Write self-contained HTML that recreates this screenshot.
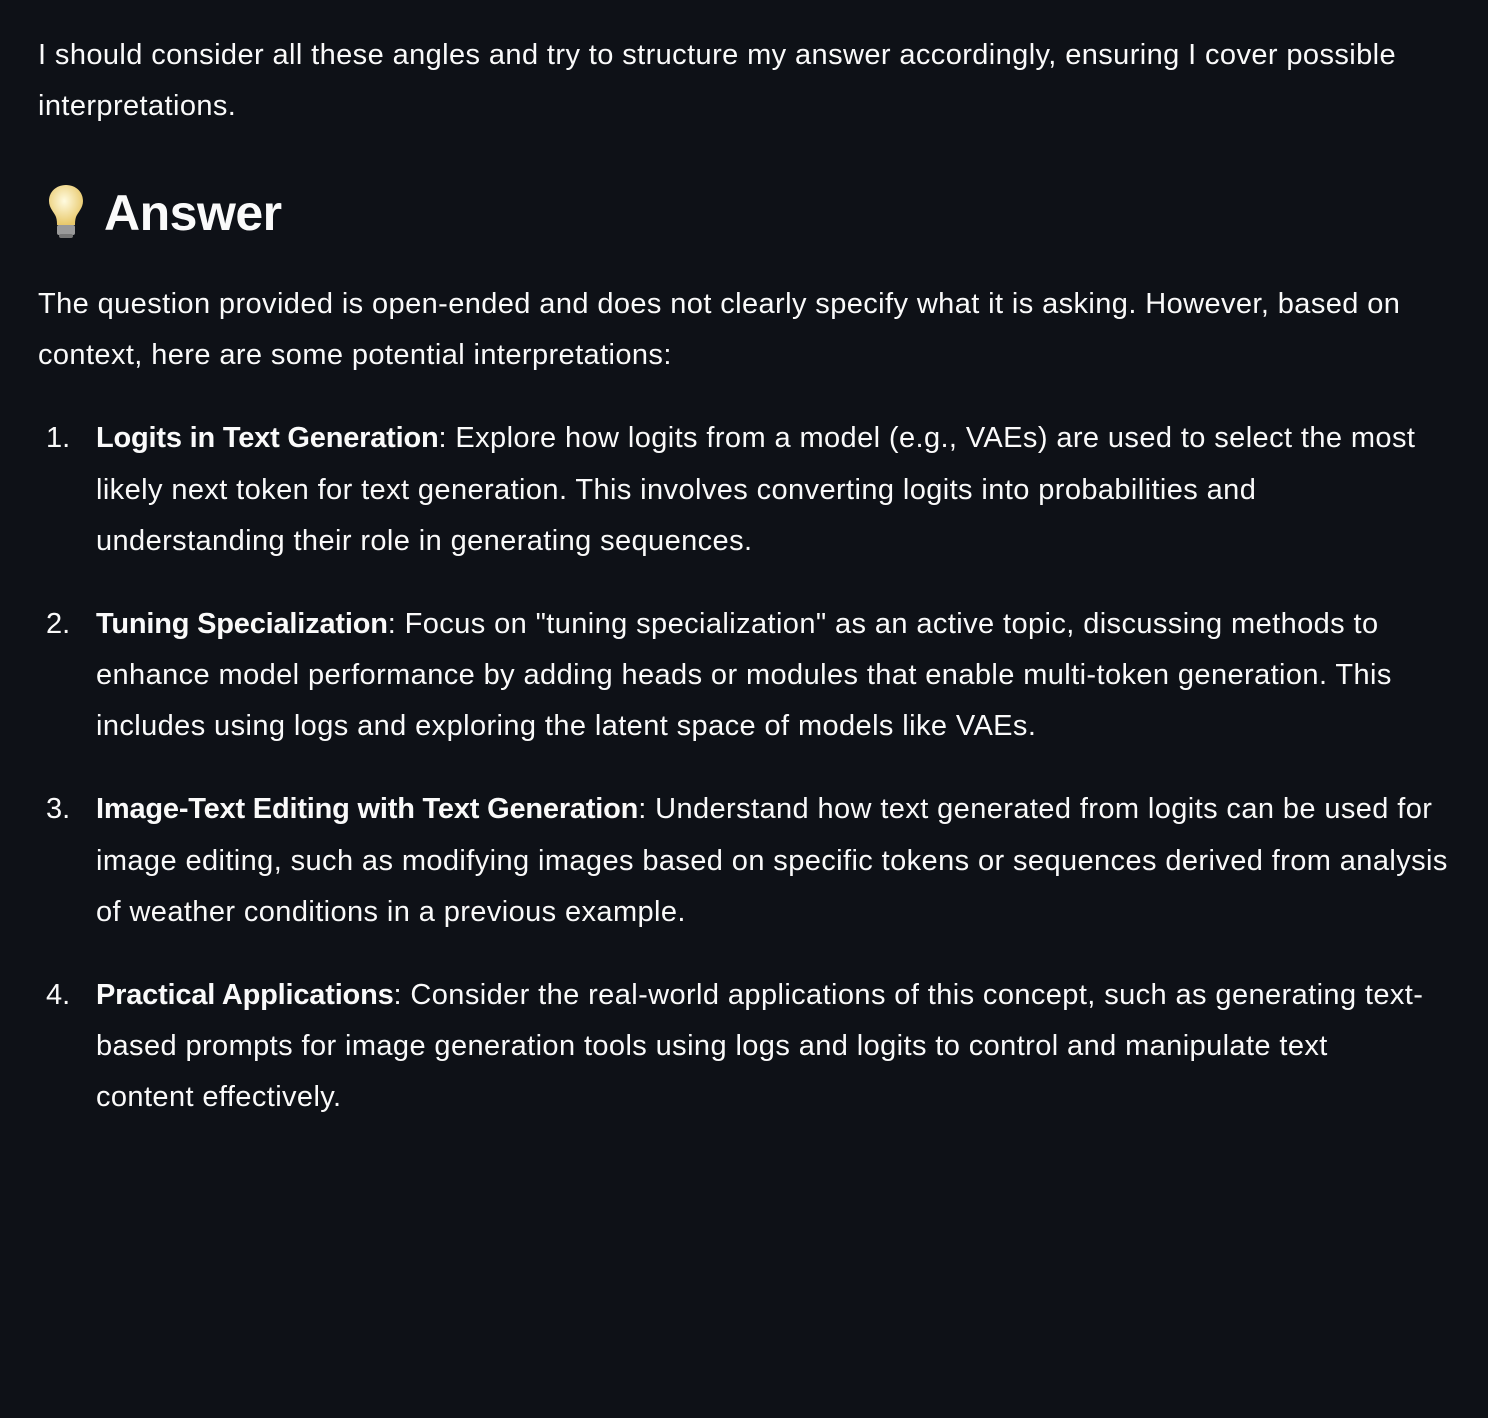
<!DOCTYPE html>
<html><head><meta charset="utf-8"><style>
html,body{margin:0;padding:0;background:#0e1117;width:1488px;height:1418px;overflow:hidden}
body{position:relative;color:#fafafa;font-family:"Liberation Sans",sans-serif;font-size:29px}
.l{position:absolute;white-space:nowrap;height:51px;line-height:51px;letter-spacing:0.4px;margin-top:1px}
b{font-weight:bold;letter-spacing:-0.2px}
.n{position:absolute;left:46px;height:51px;line-height:51px;margin-top:1px}
h2{position:absolute;left:104px;top:180px;margin:0;font-size:50px;line-height:66px;font-weight:bold;letter-spacing:-0.5px}
</style></head><body>
<div class="l" style="left:38px;top:29px">I should consider all these angles and try to structure my answer accordingly, ensuring I cover possible</div>
<div class="l" style="left:38px;top:80px">interpretations.</div>
<svg style="position:absolute;left:44px;top:182px" width="44" height="58" viewBox="0 0 44 58">
<defs><radialGradient id="g" cx="0.45" cy="0.4" r="0.6"><stop offset="0" stop-color="#fffbe0"/><stop offset="1" stop-color="#e8c86a"/></radialGradient></defs>
<path d="M22 3C12 3 5 10 5 19c0 7 5 11 7 16 1 3 1 6 1 8h18c0-2 0-5 1-8 2-5 7-9 7-16C39 10 32 3 22 3z" fill="url(#g)"/>
<rect x="13" y="43" width="18" height="10" rx="2" fill="#9a9a9a"/>
<rect x="15" y="52" width="14" height="4" rx="2" fill="#777"/>
</svg>
<h2>Answer</h2>
<div class="l" style="left:38px;top:278px">The question provided is open-ended and does not clearly specify what it is asking. However, based on</div>
<div class="l" style="left:38px;top:329px">context, here are some potential interpretations:</div>

<div class="n" style="top:412px">1.</div>
<div class="l" style="left:96px;top:412px"><b>Logits in Text Generation</b>: Explore how logits from a model (e.g., VAEs) are used to select the most</div>
<div class="l" style="left:96px;top:464px">likely next token for text generation. This involves converting logits into probabilities and</div>
<div class="l" style="left:96px;top:515px">understanding their role in generating sequences.</div>

<div class="n" style="top:598px">2.</div>
<div class="l" style="left:96px;top:598px"><b>Tuning Specialization</b>: Focus on "tuning specialization" as an active topic, discussing methods to</div>
<div class="l" style="left:96px;top:649px">enhance model performance by adding heads or modules that enable multi-token generation. This</div>
<div class="l" style="left:96px;top:700px">includes using logs and exploring the latent space of models like VAEs.</div>

<div class="n" style="top:783px">3.</div>
<div class="l" style="left:96px;top:783px"><b>Image-Text Editing with Text Generation</b>: Understand how text generated from logits can be used for</div>
<div class="l" style="left:96px;top:835px">image editing, such as modifying images based on specific tokens or sequences derived from analysis</div>
<div class="l" style="left:96px;top:886px">of weather conditions in a previous example.</div>

<div class="n" style="top:969px">4.</div>
<div class="l" style="left:96px;top:969px"><b>Practical Applications</b>: Consider the real-world applications of this concept, such as generating text-</div>
<div class="l" style="left:96px;top:1020px">based prompts for image generation tools using logs and logits to control and manipulate text</div>
<div class="l" style="left:96px;top:1071px">content effectively.</div>
</body></html>
